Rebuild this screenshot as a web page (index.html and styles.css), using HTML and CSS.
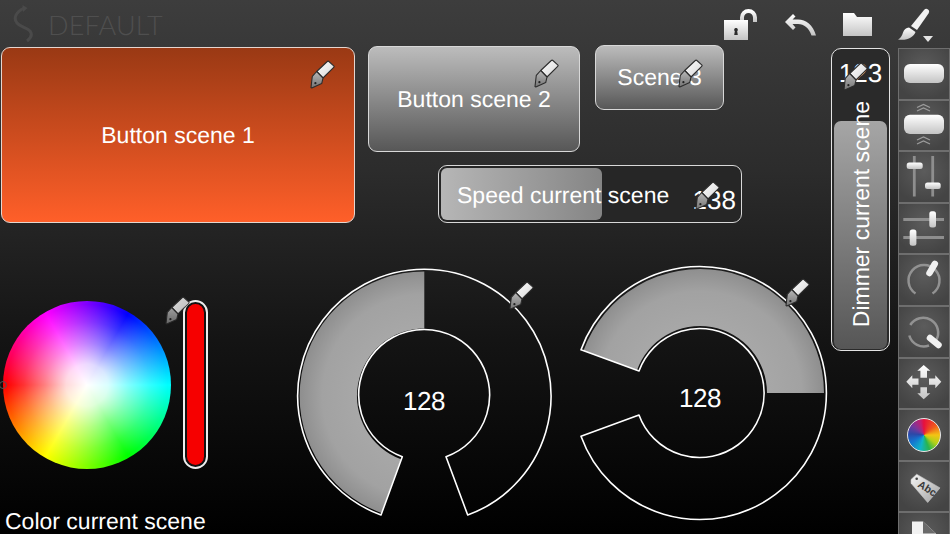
FILE: index.html
```html
<!DOCTYPE html>
<html lang="en">
<head>
<meta charset="utf-8">
<title>Scene editor</title>
<link rel="stylesheet" href="styles.css">
</head>
<body>
<svg class="defs" width="0" height="0" aria-hidden="true">
  <defs>
    <linearGradient id="penBody" x1="0" y1="0" x2="1" y2="1">
      <stop offset="0" stop-color="#ffffff"/><stop offset="1" stop-color="#d6d6d6"/>
    </linearGradient>
    <linearGradient id="penNib" x1="0" y1="0" x2="0" y2="1">
      <stop offset="0" stop-color="#b8b8b8"/><stop offset="1" stop-color="#747474"/>
    </linearGradient>
    <linearGradient id="iconWhite" x1="0" y1="0" x2="0" y2="1">
      <stop offset="0" stop-color="#ffffff"/><stop offset="1" stop-color="#c4c4c4"/>
    </linearGradient>
    <linearGradient id="tagFill" x1="0" y1="0" x2="1" y2="1">
      <stop offset="0" stop-color="#f6f6f6"/><stop offset="1" stop-color="#a0a0a0"/>
    </linearGradient>
    <radialGradient id="ringA" gradientUnits="userSpaceOnUse" cx="127" cy="127" r="127">
      <stop offset="0.5" stop-color="#a8a8a8"/><stop offset="0.8" stop-color="#a2a2a2"/><stop offset="1" stop-color="#8c8c8c"/>
    </radialGradient>
    <symbol id="pen" viewBox="0 0 25 29">
      <path d="M6.700 11.500 17.300 1.500q.8-.8 1.600 0l4.800 4.300q.8.800 0 1.600L13 18Z" fill="url(#penBody)" stroke="#2c2c2c" stroke-width="1.100" stroke-linejoin="round"/>
      <path d="M6.700 11.500 2.300 16.300 1 27.500 1.800 28 11.700 23.600 13 18Z" fill="url(#penNib)" stroke="#2c2c2c" stroke-width="1.100" stroke-linejoin="round"/>
      <circle cx="5.400" cy="23.200" r="1.100" fill="#222"/>
    </symbol>
  </defs>
</svg>

<div class="app">
  <header class="topbar">
    <svg class="logo" viewBox="0 0 24 38" aria-hidden="true">
      <path d="M11 3C3 7 0 13 4 18 7 22 13 22 17 26 20 30 18 33 14 36" fill="none" stroke="#4a4a4a" stroke-width="3"/>
      <path d="M9.500 0l5 3-4.500 4Z" fill="#4a4a4a"/>
    </svg>
    <span class="title">DEFAULT</span>
    <div class="actions">
      <svg class="act lock" viewBox="0 0 34 32" aria-hidden="true">
        <path d="M18 13V9.500a6.500 6.500 0 0 1 13 0V14" fill="none" stroke="url(#iconWhite)" stroke-width="4"/>
        <path d="M0 12H24V32H0Z" fill="url(#iconWhite)"/>
        <path d="M12 20a1.800 1.800 0 0 1 1.200 3.200l.6 3.800h-3.600l.6-3.800A1.800 1.800 0 0 1 12 20Z" fill="#2d2d2d"/>
      </svg>
      <svg class="act undo" viewBox="0 0 31 22" aria-hidden="true">
        <path d="M8 0 0 8l8 8 2.500-2.500-3-3.500H13c6 0 11 4 13.500 11.500H31C28 11 21 5.500 13 5.500H7.500L10.500 2.500Z" fill="url(#iconWhite)"/>
      </svg>
      <svg class="act folder" viewBox="0 0 29 23" aria-hidden="true">
        <path d="M0 0H11L14 4H29V23H0Z" fill="url(#iconWhite)"/>
      </svg>
      <svg class="act brush" viewBox="0 0 36 34" aria-hidden="true">
        <path d="M13 18 26 2q2-2 4-.5t.5 4L19 22Z" fill="#f2f2f2"/>
        <path d="M11 19.500 17.500 24C16 29 9 33 0 31.500c3-1.500 4-4 5-7 1-3 3-4.500 6-5Z" fill="url(#iconWhite)"/>
        <path d="M25 28H35L30 34Z" fill="#e4e4e4"/>
      </svg>
    </div>
  </header>

  <div class="workspace">
    <main class="canvas">
      <div class="widget btn btn-orange b1"><span>Button scene 1</span></div>
      <svg class="pen p1"><use href="#pen"/></svg>

      <div class="widget btn btn-grey b2"><span>Button scene 2</span></div>
      <svg class="pen p2"><use href="#pen"/></svg>

      <div class="widget btn btn-grey b3"><span>Scene 3</span></div>
      <svg class="pen p3"><use href="#pen"/></svg>

      <div class="widget speed">
        <div class="speed-fill"></div>
        <span class="speed-label">Speed current scene</span>
        <span class="speed-val">138</span>
      </div>
      <svg class="pen p4"><use href="#pen"/></svg>

      <div class="widget dimmer">
        <div class="dimmer-fill"></div>
        <span class="dimmer-val">123</span>
        <span class="dimmer-label">Dimmer current scene</span>
      </div>
      <svg class="pen p5"><use href="#pen"/></svg>

      <div class="wheel"><i class="wheel-mark"></i></div>
      <div class="redbar"><i></i></div>
      <svg class="pen p6 faded"><use href="#pen"/></svg>
      <div class="color-label">Color current scene</div>

      <div class="ring r1">
        <svg viewBox="0 0 254 254" width="254" height="254" aria-hidden="true">
          <path d="M84.300 243.900A124.500 124.500 0 0 1 127.300 2.500V59.500A67.500 67.500 0 0 0 104 190.300Z" fill="url(#ringA)"/>
          <path d="M84 246A126.700 126.700 0 1 1 170.700 246L149 187.700A65.500 65.500 0 1 0 105.300 187.700Z" fill="none" stroke="#fff" stroke-width="1.600" stroke-linejoin="round"/>
        </svg>
        <span class="ring-val">128</span>
      </div>
      <svg class="pen p7"><use href="#pen"/></svg>

      <div class="ring r2">
        <svg viewBox="0 0 254 254" width="254" height="254" aria-hidden="true">
          <path d="M10.400 84.800A124 124 0 0 1 251 127H194A67 67 0 0 0 64 104.200Z" fill="url(#ringA)"/>
          <path d="M8 83.800A126.500 126.500 0 1 1 8 170.200L66 149A64.500 64.500 0 1 0 66 105Z" fill="none" stroke="#fff" stroke-width="1.600" stroke-linejoin="round"/>
        </svg>
        <span class="ring-val">128</span>
      </div>
      <svg class="pen p8"><use href="#pen"/></svg>
    </main>

    <nav class="sidebar">
      <div class="cell">
        <svg viewBox="0 0 52 52" aria-hidden="true"><rect x="6" y="16" width="40" height="19" rx="6" fill="url(#iconWhite)"/></svg>
      </div>
      <div class="cell">
        <svg viewBox="0 0 52 52" aria-hidden="true">
          <rect x="6" y="15.700" width="40" height="19.300" rx="6" fill="url(#iconWhite)"/>
          <path d="M19 8.500l6.500-3 6.500 3M19 12l6.500-3 6.500 3M19 41l6.500-3 6.500 3M19 45l6.500-3 6.500 3" fill="none" stroke="#9c9c9c" stroke-width="1.300"/>
        </svg>
      </div>
      <div class="cell">
        <svg viewBox="0 0 52 52" aria-hidden="true">
          <path d="M16.300 5V45.500M34.700 5V45.500" stroke="#8e8e8e" stroke-width="2.800"/>
          <rect x="8.700" y="11.500" width="16" height="6.500" rx="2.500" fill="url(#iconWhite)"/>
          <rect x="27" y="31.500" width="15.700" height="6.500" rx="2.500" fill="url(#iconWhite)"/>
        </svg>
      </div>
      <div class="cell">
        <svg viewBox="0 0 52 52" aria-hidden="true">
          <path d="M5.300 16.500H46M5.300 34.500H46" stroke="#8e8e8e" stroke-width="2.800"/>
          <rect x="31.300" y="8.200" width="6.700" height="16.300" rx="2.500" fill="url(#iconWhite)"/>
          <rect x="11.700" y="26.500" width="6.700" height="16.300" rx="2.500" fill="url(#iconWhite)"/>
        </svg>
      </div>
      <div class="cell">
        <svg viewBox="0 0 52 52" aria-hidden="true">
          <path d="M17.500 39.500A15.500 15.500 0 1 1 34.500 39.500" fill="none" stroke="#929292" stroke-width="2.500"/>
          <path d="M31.500 19 36.800 9.800" stroke="#f0f0f0" stroke-width="6.500" stroke-linecap="round"/>
        </svg>
      </div>
      <div class="cell">
        <svg viewBox="0 0 52 52" aria-hidden="true">
          <path d="M12.300 19A15 15 0 1 1 38 34.500M31 39.500A15 15 0 0 1 11.300 29.500" fill="none" stroke="#929292" stroke-width="2.500"/>
          <path d="M32 32 40.500 39" stroke="#f0f0f0" stroke-width="6.500" stroke-linecap="round"/>
        </svg>
      </div>
      <div class="cell">
        <svg viewBox="0 0 52 52" aria-hidden="true">
          <path d="M25.700 8l6.600 5.700H29v7h-6.600v-7h-3.100ZM25.700 42.300l6.600-6H29v-6h-6.600v6h-3.100ZM8.300 24.700l6-6.500v3.300h6.200v6.300h-6.200v3.400ZM43.300 24.700l-6-6.500v3.300H31v6.300h6.300v3.400Z" fill="url(#iconWhite)"/>
        </svg>
      </div>
      <div class="cell">
        <div class="mini-wheel"></div>
      </div>
      <div class="cell">
        <svg viewBox="0 0 52 52" aria-hidden="true">
          <path d="M13 18.500 18.700 13.200 42 26.900 29.700 41.500 13 22.200Z" fill="url(#tagFill)" stroke="#c8c8c8" stroke-width=".6" stroke-linejoin="round"/>
          <circle cx="18.700" cy="17.800" r="1.300" fill="#444"/>
          <text class="tag-text" x="29" y="31" text-anchor="middle" transform="rotate(32 29 28)">Abc</text>
        </svg>
      </div>
      <div class="cell">
        <svg viewBox="0 0 52 52" aria-hidden="true"><path d="M14 9.600H25L38 21.600V52H14Z" fill="#f2f2f2"/><path d="M25 9.600V21.600H38Z" fill="#6a6a6a"/></svg>
      </div>
    </nav>
  </div>
</div>
</body>
</html>
```

FILE: styles.css
```css
* { box-sizing: border-box; }
html, body { margin: 0; padding: 0; height: 100%; overflow: hidden; }
body { font-family: "Liberation Sans", Arial, sans-serif; color: #fff; background: #000; text-rendering: geometricPrecision; }
.defs { position: absolute; }

.app {
  width: 950px;
  height: 534px;
  display: flex;
  flex-direction: column;
  overflow: hidden;
  background: linear-gradient(#3d3d3d 0, #2c2c2c 170px, #141414 340px, #000 534px);
}

.topbar { flex: 0 0 48px; display: flex; align-items: center; padding-left: 13px; }
.logo { width: 24px; height: 38px; flex: none; }
.title { margin-left: 11px; font-family: Lato, sans-serif; font-weight: 300; font-size: 27px; letter-spacing: .2px; color: #4f4f4f; line-height: 1; }
.actions { margin-left: auto; display: flex; align-items: flex-start; height: 48px; position: relative; width: 226px; }
.act { position: absolute; }
.lock { left: 0; top: 8px; width: 34px; height: 32px; }
.undo { left: 61px; top: 14px; width: 31px; height: 22px; }
.folder { left: 119px; top: 13px; width: 29px; height: 23px; }
.brush { left: 174px; top: 8px; width: 36px; height: 34px; }

.workspace { flex: 1; display: flex; min-height: 0; }
.canvas { flex: 1; position: relative; }

.widget { position: absolute; }
.btn { display: flex; align-items: center; justify-content: center; border: 1px solid #d8d8d8; border-radius: 9px; font-size: 23px; line-height: 1; }
.btn-orange { background: linear-gradient(#9a3914, #ff5f29); border-color: #e6d6cf; }
.btn-grey { background: linear-gradient(#bcbcbc, #575757); }
.b1 { left: 1px; top: -1px; width: 354px; height: 176px; }
.b2 { left: 368px; top: -2px; width: 212px; height: 106px; }
.b3 { left: 595px; top: -3px; width: 129px; height: 65px; }

.speed { left: 438px; top: 117px; width: 304px; height: 58px; border: 1px solid #d8d8d8; border-radius: 9px; background: #262626; }
.speed-fill { position: absolute; left: 2px; top: 2px; bottom: 2px; width: 161px; border-radius: 6px; background: linear-gradient(90deg, #b6b6b6, #858585); }
.speed-label { position: absolute; left: 18px; top: 17px; font-size: 23px; line-height: 24px; white-space: nowrap; }
.speed-val { position: absolute; right: 5px; top: 20px; font-size: 26px; line-height: 28px; }

.dimmer { left: 831px; top: 0; width: 59px; height: 303px; border: 1px solid #e4e4e4; border-radius: 10px; background: #2a2a2a; }
.dimmer-fill { position: absolute; left: 2px; right: 2px; top: 72px; bottom: 1px; border-radius: 7px; background: linear-gradient(#a6a6a6, #565656); }
.dimmer-val { position: absolute; left: 0; right: 0; top: 10px; text-align: center; font-size: 26px; line-height: 28px; }
.dimmer-label { position: absolute; left: 16px; bottom: 23px; writing-mode: vertical-rl; transform: rotate(180deg); font-size: 23px; line-height: 26px; white-space: nowrap; }

.pen { position: absolute; width: 25px; height: 29px; }
.p1 { left: 310px; top: 12px; }
.p2 { left: 534px; top: 11px; }
.p3 { left: 678px; top: 11px; }
.p4 { left: 695px; top: 133px; }
.p5 { left: 843px; top: 14px; }
.p6 { left: 165px; top: 248px; }
.p7 { left: 509px; top: 233px; }
.p8 { left: 785px; top: 230px; }
.faded { opacity: .85; }

.wheel {
  position: absolute; left: 3px; top: 253px; width: 168px; height: 168px; border-radius: 50%;
  background:
    radial-gradient(circle closest-side, #fff 0, rgba(255,255,255,.85) 25%, rgba(255,255,255,.5) 50%, rgba(255,255,255,.2) 75%, rgba(255,255,255,0) 96%),
    conic-gradient(from 270deg, #f00, #f0f, #00f, #0ff, #0f0, #ff0, #f00);
}
.wheel-mark { position: absolute; left: -4px; top: 80px; width: 8px; height: 8px; border-radius: 50%; border: 1px solid #555; }
.redbar { position: absolute; left: 183px; top: 252px; width: 25px; height: 169px; border: 2px solid #eee; border-radius: 13px; padding: 2px; background: #111; }
.redbar i { display: block; height: 100%; border-radius: 10px; background: #f60000; }
.color-label { position: absolute; left: 5px; top: 460px; font-size: 23px; line-height: 26px; white-space: nowrap; }

.ring { position: absolute; width: 254px; height: 254px; }
.ring svg { display: block; overflow: visible; }
.r1 { left: 297px; top: 221px; }
.r2 { left: 573px; top: 217.500px; }
.ring-val { position: absolute; left: 0; right: 0; text-align: center; font-size: 26px; line-height: 26px; letter-spacing: -.5px; }
.r1 .ring-val { top: 119px; }
.r2 .ring-val { top: 119px; }

.sidebar { flex: 0 0 52px; display: flex; flex-direction: column; height: 486px; overflow: hidden; }
.cell {
  flex: 0 0 51.600px;
  min-height: 0;
  display: flex; align-items: center; justify-content: center;
  border: 1.500px solid #6e6e6e;
  border-top-width: 1px; border-bottom-width: 1.500px;
  background: radial-gradient(circle at 50% 38%, #5c5c5c, #444 80%);
}
.cell svg { width: 52px; height: 52px; display: block; flex: none; }
.mini-wheel {
  width: 34px; height: 34px; border-radius: 50%; border: 1px solid #e8e8e8; flex: none;
  background: conic-gradient(#e8103c 0, #f0581c 50deg, #f4c414 90deg, #b4d018 125deg, #28b450 160deg, #10b4c8 195deg, #1474d0 240deg, #2c48a8 275deg, #78389c 310deg, #c02070 345deg, #e8103c 360deg);
}
.tag-text { font-family: "Liberation Sans", Arial, sans-serif; font-size: 10.500px; font-weight: 700; fill: #3a3a3a; }
```
